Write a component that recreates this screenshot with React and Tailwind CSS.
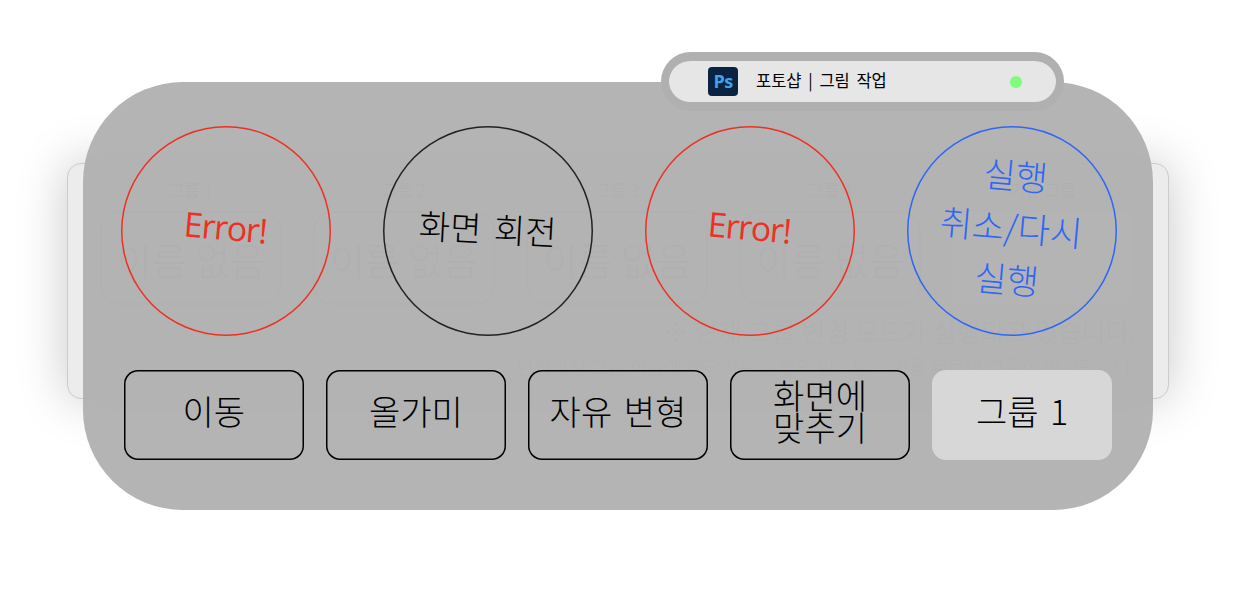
import React from 'react';

const FONT = "font-['Noto_Sans_CJK_KR','Noto_Sans',sans-serif]";

const GROUPS = ['그룹 1', '그룹 2', '그룹 3', '그룹 4'];
const ACTIONS = ['이동', '올가미', '자유 변형', '화면에 맞추기'];

function GroupColumn({ label, active }) {
  return (
    <div className="flex w-[182px] flex-col items-center">
      <div className="mb-[10px] h-[23px] text-[17px] font-light leading-[23px] text-[#8a8a8a]">{label}</div>
      {active ? (
        <div className="h-[94px] w-full rounded-[20px] bg-white" />
      ) : (
        <div className="flex h-[94px] w-full items-center justify-center rounded-[20px] border-2 border-[#c4c4c4] text-[38px] font-light text-[#a8a8a8]">
          이름 없음
        </div>
      )}
    </div>
  );
}

function Circle({ ring, children }) {
  return (
    <div className={`flex h-[209.5px] w-[209.5px] items-center justify-center rounded-full text-center ${ring}`}>
      {children}
    </div>
  );
}

function ErrorLabel() {
  return (
    <span className="mb-[7px] rotate-[5deg] font-['Open_Sans',sans-serif] text-[34px] leading-none tracking-[-1.2px] text-[#ee3024]">
      Error!
    </span>
  );
}

function PsIcon() {
  return (
    <div className="flex h-[29px] w-[30px] items-center justify-center rounded-[4px] bg-[#0a2342] font-['Open_Sans',sans-serif] text-[18px] font-bold tracking-[-0.5px] text-[#3fa0ec]">
      Ps
    </div>
  );
}

export default function App() {
  return (
    <div className={`relative h-[594px] w-full overflow-hidden bg-white ${FONT}`}>
      {/* Panel behind the overlay */}
      <div className="pt-[163px] pl-[67px]">
        <div className="h-[236px] w-[1102px] rounded-[14px] border border-[#cccccc] bg-[#ececec] px-[32px] pt-[14px] shadow-[0_0_50px_rgba(0,0,0,0.22)]">
          <div className="flex gap-[31px]">
            {GROUPS.map((g) => (
              <GroupColumn key={g} label={g} />
            ))}
            <GroupColumn label="기본 그룹" active />
          </div>
          <div className="mt-[8px] text-right text-[26px] font-light leading-[36px] text-[#a8a8a8]">※ 현재 그룹 변경 모드가 실행되고 있습니다.</div>
          <div className="mt-[3px] text-right text-[19px] font-light leading-[30px] text-[#b0b0b0]">변경하신 그룹 이름에 해당하는 위젯의 인스턴스 키를 누르면 그룹이 변경됩니다.</div>
        </div>
      </div>

      {/* Overlay */}
      <div className="absolute top-[82px] left-[83px] h-[428px] w-[1070px] rounded-[100px] bg-[#b0b0b0]/95 pt-[44px] pl-[38px]">
        <div className="flex gap-[52.5px]">
          <Circle ring="shadow-[inset_0_0_0_1.5px_#ee3024]">
            <ErrorLabel />
          </Circle>
          <Circle ring="shadow-[inset_0_0_0_1.5px_#222222]">
            <span className="mb-[6px] rotate-[3deg] text-[34px] font-light leading-none text-black [word-spacing:5px]">화면 회전</span>
          </Circle>
          <Circle ring="shadow-[inset_0_0_0_1.5px_#ee3024]">
            <ErrorLabel />
          </Circle>
          <Circle ring="shadow-[inset_0_0_0_1.5px_#2f66f5]">
            <div className="mb-[10px] rotate-[5deg] text-[35px] font-light leading-[52px] text-[#2f66f5]">
              <div>실행</div>
              <div>취소/다시</div>
              <div>실행</div>
            </div>
          </Circle>
        </div>
        <div className="mt-[34px] ml-[3px] flex gap-[22.6px]">
          {ACTIONS.map((a) => (
            <div
              key={a}
              className="flex h-[90px] w-[179.5px] items-center justify-center rounded-[14px] px-[4px] pb-[8px] text-center text-[34px] font-light leading-[32px] break-keep text-black shadow-[inset_0_0_0_1.5px_#000000] [word-spacing:4px]"
            >
              {a}
            </div>
          ))}
          <div className="flex h-[90px] w-[179.5px] items-center justify-center rounded-[14px] bg-[#d7d7d7] pb-[8px] text-[34px] font-light text-black [word-spacing:4px]">
            그룹 1
          </div>
        </div>
      </div>

      {/* Status pill */}
      <div className="absolute top-[52px] left-[661px] flex h-[59px] w-[403px] items-center rounded-full border-x-[8px] border-y-[9px] border-[#b0b0b0] bg-[#e6e6e6] pr-[34px] pl-[39px]">
        <PsIcon />
        <span className="ml-[18px] pb-[3px] text-[16.5px] text-black [word-spacing:3px]">포토샵 | 그림 작업</span>
        <span className="ml-auto h-[12px] w-[12px] rounded-full bg-[#7dfc7d]" />
      </div>
    </div>
  );
}
